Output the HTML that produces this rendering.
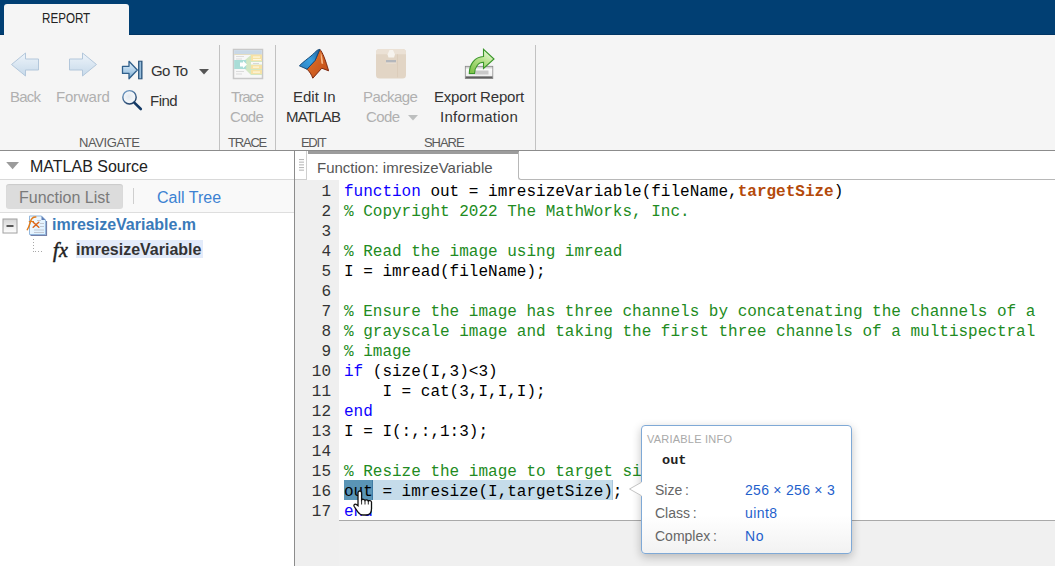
<!DOCTYPE html>
<html><head><meta charset="utf-8">
<style>
*{margin:0;padding:0;box-sizing:border-box}
html,body{width:1055px;height:566px;overflow:hidden;background:#fff;font-family:"Liberation Sans",sans-serif}
.a{position:absolute}
.rb{font-size:15px;color:#333;white-space:nowrap;line-height:20px}
.dis{color:#b0b0b0}
.grp{font-size:13px;color:#5a5a5a;letter-spacing:-0.7px;white-space:nowrap}
.sep{position:absolute;width:1px;background:#c2c2c2;top:45px;height:105px}
.code{font-family:"Liberation Mono",monospace;font-size:16px;line-height:20px;white-space:pre;color:#000}
.kw{color:#0e00ff}
.cm{color:#228b22}
.var{color:#b44a0b;font-weight:bold}
.ln{font-family:"Liberation Mono",monospace;font-size:16px;line-height:20px;color:#333;text-align:right;width:36px;white-space:pre}
</style></head><body>
<!-- top blue bar -->
<div class="a" style="left:0;top:0;width:1055px;height:35px;background:#013f73"></div>
<div class="a" style="left:0;top:34px;width:1055px;height:1px;background:#003564"></div>
<!-- tab -->
<div class="a" style="left:4px;top:4px;width:125px;height:32px;background:#f5f5f5;border-radius:3px 3px 0 0"></div>
<div class="a" style="left:42px;top:10px;font-size:14px;color:#222;white-space:nowrap;transform:scaleX(0.83);transform-origin:0 0">REPORT</div>
<!-- ribbon -->
<div class="a" style="left:0;top:35px;width:1055px;height:115px;background:#f5f5f5"></div>
<div class="a" style="left:0;top:150px;width:1055px;height:1px;background:#8c8c8c"></div>
<div class="sep" style="left:219px"></div>
<div class="sep" style="left:275px"></div>
<div class="sep" style="left:535px"></div>

<!-- NAVIGATE -->
<svg class="a" style="left:10px;top:52px" width="30" height="26" viewBox="0 0 30 26">
 <defs><linearGradient id="ag" x1="0" y1="0" x2="0" y2="1"><stop offset="0" stop-color="#eef4fa"/><stop offset="1" stop-color="#c6d9ea"/></linearGradient></defs>
 <path d="M1.5 12.5 L15.5 1 V7 H28.5 V18 H15.5 V24 Z" fill="url(#ag)" stroke="#b3c7db" stroke-width="1"/>
</svg>
<svg class="a" style="left:68px;top:52px" width="30" height="26" viewBox="0 0 30 26">
 <path d="M28.5 12.5 L14.5 1 V7 H1.5 V18 H14.5 V24 Z" fill="url(#ag)" stroke="#b3c7db" stroke-width="1"/>
</svg>
<div class="a rb dis" style="left:10px;top:87px;letter-spacing:-0.75px">Back</div>
<div class="a rb dis" style="left:56px;top:87px;letter-spacing:-0.2px">Forward</div>

<svg class="a" style="left:121px;top:60px" width="22" height="20" viewBox="0 0 22 20">
 <defs><linearGradient id="gg" x1="0" y1="0" x2="0" y2="1"><stop offset="0" stop-color="#e6f2fb"/><stop offset="0.6" stop-color="#a9cbe6"/><stop offset="1" stop-color="#6f9fc6"/></linearGradient>
 <linearGradient id="gb" x1="0" y1="0" x2="1" y2="0"><stop offset="0" stop-color="#3f729e"/><stop offset="0.5" stop-color="#a8cbe6"/><stop offset="1" stop-color="#2c5a84"/></linearGradient></defs>
 <path d="M1.5 6.3 H8 V1.3 L16.3 10 L8 18.7 V13.4 H1.5 Z" fill="url(#gg)" stroke="#30608c" stroke-width="1.3" stroke-linejoin="round"/>
 <rect x="17.6" y="1.2" width="3.4" height="17.6" fill="url(#gb)" stroke="#28527a" stroke-width="1"/>
</svg>
<div class="a rb" style="left:151px;top:61px;letter-spacing:-0.65px">Go To</div>
<svg class="a" style="left:199px;top:69px" width="10" height="6" viewBox="0 0 10 6"><path d="M0 0 H10 L5 5.5 Z" fill="#555"/></svg>
<svg class="a" style="left:121px;top:89px" width="22" height="22" viewBox="0 0 22 22">
 <defs><radialGradient id="mg" cx="0.45" cy="0.45" r="0.6"><stop offset="0" stop-color="#e2e8ee"/><stop offset="0.7" stop-color="#f4f7fa"/><stop offset="1" stop-color="#c5d6e6"/></radialGradient>
 <linearGradient id="mr" x1="0" y1="0" x2="0.6" y2="1"><stop offset="0" stop-color="#7aa6d0"/><stop offset="1" stop-color="#203f66"/></linearGradient></defs>
 <circle cx="8.5" cy="8.3" r="6.7" fill="url(#mg)" stroke="url(#mr)" stroke-width="1.4"/>
 <path d="M13.3 13.6 L19.8 20" stroke="#143a66" stroke-width="2.6" stroke-linecap="round"/>
</svg>
<div class="a rb" style="left:150px;top:91px;letter-spacing:-0.5px">Find</div>
<div class="a grp" style="left:79px;top:135px;letter-spacing:-0.4px">NAVIGATE</div>

<!-- TRACE -->
<svg class="a" style="left:232px;top:48px" width="32" height="32" viewBox="0 0 32 32">
 <rect x="1.5" y="1.5" width="29" height="29" fill="#f7f7f7" stroke="#c8c8c8" stroke-width="1.5"/>
 <rect x="2.2" y="2.2" width="27.6" height="4.5" fill="#c9d8e6"/>
 <rect x="2.2" y="6.2" width="27.6" height="0.8" fill="#e8dcb8"/>
 <rect x="4" y="8" width="8" height="1" fill="#dcdcdc"/>
 <rect x="4" y="10.5" width="6" height="1" fill="#dcdcdc"/>
 <rect x="4" y="23" width="8" height="1" fill="#dcdcdc"/>
 <rect x="4" y="25.5" width="6" height="1" fill="#dcdcdc"/>
 <path d="M13 12 L19 7 H30 V27 H19 L13 21 Z" fill="#d3e7c3"/>
 <rect x="2.2" y="12" width="12" height="9" fill="#a9ddd7"/>
 <path d="M8 14.5 H11 V12.8 L15 16.5 L11 20.2 V18.5 H8 Z" fill="#ffffff"/>
 <rect x="19" y="7" width="11" height="6" fill="#f6e2a6"/>
 <rect x="21" y="8.5" width="7" height="1.2" fill="#fff8e0"/>
 <rect x="21" y="11" width="8" height="1.2" fill="#fff8e0"/>
 <rect x="19" y="14" width="11" height="2.5" fill="#f8f8f8"/>
 <rect x="21" y="15" width="6" height="1" fill="#d8d8d8"/>
 <rect x="19" y="17" width="11" height="4" fill="#f6e2a6"/>
 <rect x="21" y="18.5" width="6" height="1.2" fill="#fff8e0"/>
 <rect x="19" y="22" width="11" height="4" fill="#f6e2a6"/>
 <rect x="21" y="23.5" width="7" height="1.2" fill="#fff8e0"/>
</svg>
<div class="a rb dis" style="left:231px;top:87px;letter-spacing:-1.2px">Trace</div>
<div class="a rb dis" style="left:230px;top:107px;letter-spacing:-0.7px">Code</div>
<div class="a grp" style="left:228px;top:135px;letter-spacing:-1.2px">TRACE</div>

<!-- EDIT -->
<svg class="a" style="left:298px;top:48px" width="32" height="32" viewBox="0 0 32 32">
 <defs><linearGradient id="og" x1="0" y1="0" x2="1" y2="1"><stop offset="0" stop-color="#e2772c"/><stop offset="1" stop-color="#c04a18"/></linearGradient>
 <linearGradient id="bl" x1="0" y1="1" x2="1" y2="0"><stop offset="0" stop-color="#2a7fc0"/><stop offset="0.5" stop-color="#3aa0e0"/><stop offset="1" stop-color="#1d5e98"/></linearGradient></defs>
 <path d="M21.8 1.4 C24.5 4 27.5 12 30.6 22.8 L23.8 20.2 L14.8 30.2 C13.5 26.5 11.5 23.5 9 21.2 L17.1 12.4 Z" fill="url(#og)" stroke="#7c2810" stroke-width="1"/>
 <path d="M1.4 17.8 C5 14 9.5 11 13 8 C16.5 5 19 1.4 21.8 1.4 L17.1 12.4 L9 21.2 C6 20 4 18.8 1.4 17.8 Z" fill="url(#bl)" stroke="#174a78" stroke-width="1"/>
 <path d="M22.8 4.5 C24 7.5 24.8 11 25.2 16 L23.4 15.5 C23 12 22.5 8 22.8 4.5 Z" fill="#f7b98a"/>
</svg>
<div class="a rb" style="left:293px;top:87px">Edit In</div>
<div class="a rb" style="left:286px;top:107px;letter-spacing:-0.8px">MATLAB</div>
<div class="a grp" style="left:301px;top:135px;letter-spacing:-1.3px">EDIT</div>

<!-- SHARE -->
<svg class="a" style="left:375px;top:48px" width="32" height="32" viewBox="0 0 32 32">
 <rect x="1" y="1" width="30" height="29.6" rx="3.5" fill="#e2d5c5"/>
 <path d="M4.5 1 H27.5 A3.5 3.5 0 0 1 31 4.5 V6.3 H1 V4.5 A3.5 3.5 0 0 1 4.5 1 Z" fill="#ebe1d5"/>
 <rect x="22" y="6.3" width="1" height="23" fill="#dccdbb"/>
 <path d="M12.5 6.5 L14.5 2 H18 L20 6.5 L19 9.5 H13.5 Z" fill="#f6f3ee"/>
 <rect x="11" y="12" width="10" height="2.6" fill="#b4b7bc"/>
 <rect x="11" y="14.6" width="10" height="0.8" fill="#efe7dc"/>
</svg>
<div class="a rb dis" style="left:363px;top:87px;letter-spacing:-0.6px">Package</div>
<div class="a rb dis" style="left:366px;top:107px;letter-spacing:-0.6px">Code</div>
<svg class="a" style="left:408px;top:115px" width="10" height="6" viewBox="0 0 10 6"><path d="M0 0 H10 L5 5.5 Z" fill="#bdbfbf"/></svg>

<svg class="a" style="left:464px;top:48px" width="32" height="32" viewBox="0 0 32 32">
 <defs><linearGradient id="tg" x1="0" y1="0" x2="0" y2="1"><stop offset="0" stop-color="#bdbdbd"/><stop offset="0.25" stop-color="#fafafa"/><stop offset="0.75" stop-color="#f0f0f0"/><stop offset="0.85" stop-color="#7a7a7a"/><stop offset="1" stop-color="#3a3a3a"/></linearGradient>
 <linearGradient id="eg" x1="0.2" y1="1" x2="0.7" y2="0"><stop offset="0" stop-color="#7fc24a"/><stop offset="0.6" stop-color="#b9e38f"/><stop offset="1" stop-color="#eaf8dc"/></linearGradient></defs>
 <rect x="1.3" y="18.3" width="27.5" height="12.3" fill="url(#tg)" stroke="#8a8a8a" stroke-width="0.8"/>
 <rect x="5" y="22.5" width="19.5" height="4" fill="#c9c9c9"/>
 <path d="M5.3 25.5 C5.3 16 11 8.8 19.5 8.5 V1.3 L30 11 L19.5 20.5 V14.2 C14.5 14.2 11 18.5 10.5 25.5 Z" fill="url(#eg)" stroke="#3a962a" stroke-width="1.1"/>
</svg>
<div class="a rb" style="left:434px;top:87px;letter-spacing:-0.2px">Export Report</div>
<div class="a rb" style="left:440px;top:107px;letter-spacing:0.28px">Information</div>
<div class="a grp" style="left:424px;top:135px;letter-spacing:-1.05px">SHARE</div>

<!-- LEFT PANEL -->
<div class="a" style="left:294px;top:151px;width:1px;height:415px;background:#8c8c8c"></div>
<svg class="a" style="left:6px;top:162px" width="14" height="9" viewBox="0 0 14 9"><path d="M0.2 0 H13 L6.6 7.2 Z" fill="#9b9b9b"/></svg>
<div class="a" style="left:30px;top:158px;font-size:16px;color:#222;white-space:nowrap">MATLAB Source</div>
<div class="a" style="left:0;top:179px;width:294px;height:1px;background:#d9d9d9"></div>
<div class="a" style="left:0;top:180px;width:294px;height:32px;background:#f9f9f9"></div><div class="a" style="left:0;top:212px;width:294px;height:1px;background:#dedede"></div>
<div class="a" style="left:6px;top:184px;width:117px;height:25px;background:#dcdcdc;border-radius:3px;box-shadow:inset 0 1px 1px rgba(0,0,0,0.08)"></div>
<div class="a" style="left:19px;top:189px;font-size:16px;color:#7a7a7a;white-space:nowrap">Function List</div>
<div class="a" style="left:133px;top:188px;width:1px;height:16px;background:#cfcfcf"></div>
<div class="a" style="left:157px;top:189px;font-size:16px;color:#3c82d2;white-space:nowrap">Call Tree</div>


<svg class="a" style="left:2px;top:218px" width="16" height="16" viewBox="0 0 16 16">
 <defs><linearGradient id="bg1" x1="0" y1="0" x2="0" y2="1"><stop offset="0" stop-color="#d5d5d5"/><stop offset="1" stop-color="#ffffff"/></linearGradient></defs>
 <rect x="1" y="1" width="14" height="14" fill="url(#bg1)" stroke="#a0a0a0" stroke-width="1"/>
 <rect x="4.5" y="7.2" width="7" height="1.6" fill="#333"/>
</svg>
<svg class="a" style="left:25px;top:214px" width="24" height="24" viewBox="0 0 24 24">
 <defs><linearGradient id="pg" x1="0" y1="0" x2="1" y2="1"><stop offset="0" stop-color="#f4fbff"/><stop offset="1" stop-color="#dcefff"/></linearGradient></defs>
 <path d="M5.5 21.3 H21.3 V7" fill="none" stroke="#7480a8" stroke-width="1.6"/>
 <path d="M4.5 2 H16.5 L20.5 6 V20.5 H4.5 Z" fill="url(#pg)" stroke="#93b7dc" stroke-width="1"/>
 <path d="M16.5 2 L20.5 6 H16.5 Z" fill="#5f7fb8"/>
 <g fill="#c2c8d2"><rect x="12" y="6" width="4" height="1"/><rect x="15" y="9" width="4" height="1"/><rect x="15" y="12" width="4" height="1"/><rect x="9" y="15.5" width="10" height="1"/><rect x="9" y="18" width="10" height="1"/></g>
 <path d="M2.3 15.6 C4 13.5 4.6 10.5 5.6 7.2 C6.4 4.6 8 2.8 10.8 3" fill="none" stroke="#e27c1c" stroke-width="1.5" stroke-linecap="round"/>
 <path d="M3.8 7.5 H9" stroke="#e27c1c" stroke-width="1.1"/>
 <path d="M8.2 8.3 L13.8 13.2 M13.8 8.3 L8.2 13.2" stroke="#dc6418" stroke-width="1.5" stroke-linecap="round"/>
</svg>
<div class="a" style="left:52px;top:216px;font-size:16px;font-weight:bold;color:#3a7ab9;white-space:nowrap">imresizeVariable.m</div>
<div class="a" style="left:33px;top:239px;width:1px;height:13px;background:repeating-linear-gradient(#a8a8a8 0 1px,transparent 1px 3px)"></div>
<div class="a" style="left:35px;top:251px;width:9px;height:1px;background:repeating-linear-gradient(90deg,#a8a8a8 0 1px,transparent 1px 3px)"></div>
<div class="a" style="left:53px;top:239px;font-family:'Liberation Serif',serif;font-style:italic;font-size:20px;color:#222;white-space:nowrap;-webkit-text-stroke:0.5px #222;letter-spacing:0.5px">fx</div>
<div class="a" style="left:76px;top:240px;width:127px;height:18px;background:#e3ebfa"></div>
<div class="a" style="left:76px;top:241px;font-size:16px;font-weight:bold;color:#333;white-space:nowrap">imresizeVariable</div>

<!-- EDITOR -->
<div class="a" style="left:295px;top:151px;width:760px;height:415px;background:#f0f0f0"></div>
<div class="a" style="left:295px;top:151px;width:12px;height:29px;background:#fff;border-right:1px solid #cfcfcf;border-bottom:1px solid #cfcfcf"></div>
<svg class="a" style="left:299px;top:158px" width="6" height="14" viewBox="0 0 6 14"><g fill="#b9b9b9"><rect x="0" y="1" width="5" height="1.1"/><rect x="0" y="3.6" width="5" height="1.1"/><rect x="0" y="6.3" width="5" height="1.1"/><rect x="0" y="9" width="5" height="1.1"/><rect x="0" y="11.6" width="5" height="1.1"/></g></svg>
<div class="a" style="left:307px;top:151px;width:748px;height:29px;background:#fff"></div>
<div class="a" style="left:308px;top:151px;width:211px;height:3px;background:#9c9c9c"></div>
<div class="a" style="left:518px;top:152px;width:537px;height:28px;border-left:1px solid #b8b8b8;border-bottom:1px solid #b8b8b8;border-bottom-left-radius:3px"></div>
<div class="a" style="left:317px;top:159px;font-size:15px;color:#555;white-space:nowrap">Function: imresizeVariable</div>

<div class="a" style="left:295px;top:180px;width:44px;height:386px;background:#efefef"></div>
<div class="a" style="left:339px;top:180px;width:716px;height:340px;background:#fff"></div>
<div class="a" style="left:339px;top:520px;width:716px;height:1px;background:#a9a9a9"></div>

<!-- selection -->
<div class="a" style="left:344px;top:480px;width:29px;height:20px;background:#5a95b6;border-right:1px solid #3f7ba3"></div>
<div class="a" style="left:373px;top:480px;width:240px;height:20px;background:#c5dcea"></div>
<div class="a" style="left:612px;top:480px;width:1px;height:20px;background:#a9c6dc"></div>

<div class="a ln" style="left:295px;top:182px">1
2
3
4
5
6
7
8
9
10
11
12
13
14
15
16
17</div>
<div class="a code" style="left:344px;top:182px"><span class="kw">function</span> out = imresizeVariable(fileName,<span class="var">targetSize</span>)
<span class="cm">% Copyright 2022 The MathWorks, Inc.</span>

<span class="cm">% Read the image using imread</span>
I = imread(fileName);

<span class="cm">% Ensure the image has three channels by concatenating the channels of a</span>
<span class="cm">% grayscale image and taking the first three channels of a multispectral</span>
<span class="cm">% image</span>
<span class="kw">if</span> (size(I,3)&lt;3)
    I = cat(3,I,I,I);
<span class="kw">end</span>
I = I(:,:,1:3);

<span class="cm">% Resize the image to target size</span>
out = imresize(I,targetSize);
<span class="kw">end</span></div>

<!-- hand cursor -->
<svg class="a" style="left:352px;top:490px" width="22" height="27" viewBox="0 0 22 27">
 <path d="M7.8 1 C9 1 9.6 1.8 9.6 3 V9.8 C10.2 9 12.4 9 13 10.4 C13.6 9.5 15.8 9.6 16.3 11 C17 10.3 19.3 10.5 19.5 12 V18.8 C19.5 22.8 17.3 25 14 25 H11 C8.6 25 7.2 23.8 5.8 21.8 L2.2 16.5 C1.4 15.2 2.6 13.6 4 14.3 L6 15.8 V3 C6 1.8 6.6 1 7.8 1 Z" fill="#fff" stroke="#111" stroke-width="1.3"/>
 <path d="M9.6 10 V14.5 M13 10.5 V14.5 M16.3 11 V14.5" stroke="#111" stroke-width="0.9"/>
</svg>

<!-- TOOLTIP -->
<div class="a" style="left:641px;top:425px;width:211px;height:129px;border:1px solid #7fa9d6;border-radius:4px;background:linear-gradient(#fff 0,#fff 70%,#f2f2f2 100%);box-shadow:0 3px 10px rgba(0,0,0,0.24)"></div>
<svg class="a" style="left:628px;top:480px" width="16" height="18" viewBox="0 0 16 18">
 <path d="M14 2 L1.5 9 L14 16" fill="#fff" stroke="#c4c4c4" stroke-width="1"/>
 <rect x="13" y="2.5" width="1.5" height="13" fill="#fff"/>
</svg>
<div class="a" style="left:647px;top:433px;font-size:11px;color:#a9a9a9;white-space:nowrap;letter-spacing:0.22px">VARIABLE INFO</div>
<div class="a" style="left:662px;top:453px;font-family:'Liberation Mono',monospace;font-weight:bold;font-size:13.6px;color:#222">out</div>
<div class="a" style="left:655px;top:482px;font-size:14px;color:#666;white-space:nowrap">Size&#8201;:</div>
<div class="a" style="left:655px;top:505px;font-size:14px;color:#666;white-space:nowrap">Class&#8201;:</div>
<div class="a" style="left:655px;top:528px;font-size:14px;color:#666;white-space:nowrap">Complex&#8201;:</div>
<div class="a" style="left:745px;top:482px;font-size:14px;color:#1f5fcc;white-space:nowrap;letter-spacing:0.28px">256 × 256 × 3</div>
<div class="a" style="left:745px;top:505px;font-size:14px;color:#1f5fcc;white-space:nowrap;letter-spacing:0.45px">uint8</div>
<div class="a" style="left:745px;top:528px;font-size:14px;color:#1f5fcc;white-space:nowrap;letter-spacing:0.6px">No</div>
</body></html>
